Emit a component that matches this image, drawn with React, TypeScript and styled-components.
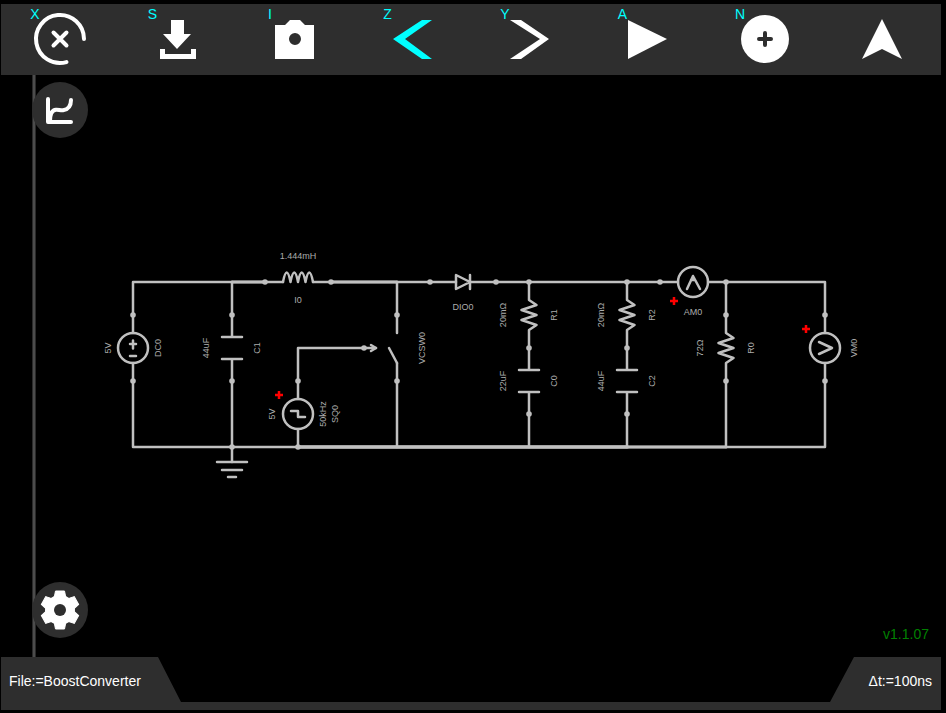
import React from "react";
import styled, { createGlobalStyle } from "styled-components";

const GlobalStyle = createGlobalStyle`
  html, body { margin: 0; background: #000; }
  * { box-sizing: border-box; }
`;

const PANEL = "#2e2e2e";
const WIRE = "#c0c0c0";

const Shell = styled.div`
  display: flex;
  flex-direction: column;
  min-height: 100vh;
  padding: 4px 5px 3px 1px;
  background: #000;
  color: #fff;
  font-family: "Liberation Sans", Arial, sans-serif;
  font-size: 14px;
  line-height: 16px;
`;

const Toolbar = styled.nav`
  display: grid;
  grid-template-columns: repeat(8, 1fr);
  height: 71px;
  background: ${PANEL};
`;

const ToolButton = styled.button<{ $active?: boolean }>`
  position: relative;
  display: flex;
  align-items: center;
  justify-content: center;
  padding: 0;
  border: 0;
  background: none;
  color: ${(p) => (p.$active ? "#00ffff" : "#ffffff")};
  font: inherit;
  cursor: pointer;
`;

const Shortcut = styled.span`
  position: absolute;
  top: 2px;
  left: 28px;
  width: 12px;
  color: #00ffff;
  text-align: center;
`;

const ToolIcon = styled.svg`
  width: 60px;
  height: 71px;
  fill: currentColor;
`;

const Workspace = styled.main`
  position: relative;
  display: flex;
  flex: 1;
`;

const Rail = styled.aside`
  display: flex;
  flex-direction: column;
  justify-content: space-between;
  width: 56px;
  margin-left: 31px;
  padding: 7px 0 19px;
  background: linear-gradient(90deg, #2a2a2a 1px, #4c4c4c 1px 3px, #2a2a2a 3px 4px, transparent 4px);
`;

const RoundButton = styled.button`
  width: 56px;
  height: 56px;
  padding: 0;
  border: 0;
  border-radius: 50%;
  background: ${PANEL};
  color: #fff;
  cursor: pointer;
`;

const RoundIcon = styled.svg`
  display: block;
  width: 56px;
  height: 56px;
`;

const Canvas = styled.section`
  display: flex;
  flex: 1;
  min-width: 0;
`;

const Schematic = styled.svg`
  flex: 1;
  min-width: 0;
  fill: none;
  stroke: ${WIRE};
  stroke-width: 2.5;
  stroke-linecap: round;
  stroke-linejoin: round;
`;

const PartText = styled.text`
  fill: #acacac;
  stroke: none;
  font-size: 9px;
  text-anchor: middle;
`;

const Version = styled.span`
  position: absolute;
  right: 12px;
  bottom: 15px;
  color: #008000;
`;

const StatusBar = styled.footer`
  display: flex;
  justify-content: space-between;
  height: 53px;
  padding: 16px 9px 0 8px;
  background: ${PANEL};
  clip-path: polygon(
    0 0, 157px 0, 180px 45px, calc(100% - 111px) 45px,
    calc(100% - 87px) 0, 100% 0, 100% 100%, 0 100%
  );
`;

type Tool = { name: string; hotkey?: string; active?: boolean; icon: React.ReactNode };

const tools: Tool[] = [
  {
    name: "Clear",
    hotkey: "X",
    icon: (
      <g fill="none" stroke="currentColor" strokeWidth="4" strokeLinecap="round">
        <path d="M54 35A24 24 0 1 0 36.5 58.1" />
        <path d="M23.5 28.5l13 13M36.5 28.5l-13 13" />
      </g>
    ),
  },
  { name: "Save", hotkey: "S", icon: <path d="M24 16h13v14h7L30 45 16 30h8zM13 45h5v5h26v-5h5v10H13z" /> },
  {
    name: "Capture image",
    hotkey: "I",
    icon: <path fillRule="evenodd" d="M10 21h10l5-5h10l5 5h9v34H10zM30 29a6 6 0 1 0 0 12a6 6 0 1 0 0-12z" />,
  },
  { name: "Undo", hotkey: "Z", active: true, icon: <path d="M11 35L40 16h10L23 35l27 20H40z" /> },
  { name: "Redo", hotkey: "Y", icon: <path d="M10 16h11l28 19-28 20H10l30-20z" /> },
  { name: "Run analysis", hotkey: "A", icon: <path d="M11 16l39 19-39 20z" /> },
  {
    name: "New element",
    hotkey: "N",
    icon: (
      <>
        <circle cx="30" cy="35" r="24" />
        <path d="M24 35h12M30 29v12" stroke={PANEL} strokeWidth="4" strokeLinecap="round" />
      </>
    ),
  },
  { name: "Navigate", icon: <path d="M30 15l20 40-20-10-20 10z" /> },
];

type Point = [number, number];

const dots: Point[] = [
  [133, 315], [133, 381], [232, 315], [232, 381], [232, 447], [265, 282], [331, 282],
  [298, 381], [298, 447], [364, 348], [397, 315], [397, 381], [430, 282], [496, 282],
  [529, 282], [529, 348], [529, 414], [627, 282], [627, 348], [627, 414], [660, 282],
  [726, 282], [726, 315], [726, 381], [825, 315], [825, 381],
];

const polarityMarks: Point[] = [[279, 395], [674, 301], [806, 329]];

const flatLabels: [string, number, number][] = [
  ["1.444mH", 298, 259],
  ["I0", 298, 303],
  ["DIO0", 463, 310],
  ["AM0", 693, 315],
];

const uprightLabels: [string, number, number][] = [
  ["5V", 111, 348], ["DC0", 161, 348], ["44uF", 209, 348], ["C1", 260, 348],
  ["5V", 275, 414], ["50kHz", 326, 414], ["SQ0", 338, 414], ["VCSW0", 425, 348],
  ["20mΩ", 506, 315], ["R1", 557, 315], ["22uF", 506, 381], ["C0", 557, 381],
  ["20mΩ", 604, 315], ["R2", 655, 315], ["44uF", 604, 381], ["C2", 655, 381],
  ["72Ω", 703, 348], ["R0", 754, 348], ["VM0", 857, 348],
];

const Resistor = ({ x, y }: { x: number; y: number }) => (
  <path d={`M${x} ${y - 33}v18l7.5 5l-15 5l15 5l-15 5l15 5l-7.5 5v18`} />
);

const Capacitor = ({ x, y }: { x: number; y: number }) => (
  <path d={`M${x} ${y - 33}v22M${x - 10} ${y - 11}h20M${x - 10} ${y + 11}h20M${x} ${y + 11}v22`} />
);

const Circuit = () => (
  <Schematic viewBox="88 75 853 582" role="img" aria-label="Boost converter schematic">
    <path d="M133 333V282H283M313 282H456M470 282H678M708 282H825V333M825 363V447H133V363" />
    <path d="M232 282v33M232 381v81M298 399V348H376M298 429v18M397 282v51M397 363v84M529 414v33M627 414v33M726 282v33M726 381v66" />
    <path d="M232 282h33M331 282h66M298 447h428" strokeWidth="3" />
    <path d="M298 447H627" strokeWidth="4" strokeOpacity="0.6" />
    <path d="M217 462h30M222 470h20M228 477h8" />
    <path d="M283 282Q286.700 263 290.500 282Q294.300 263 298 282Q301.700 263 305.500 282Q309.300 263 313 282" />
    <path d="M456 275v14l14-7zM470 275v14" />
    <path d="M389 348l8 15M371 345l5 3-5 3" />
    <Capacitor x={232} y={348} />
    <Capacitor x={529} y={381} />
    <Capacitor x={627} y={381} />
    <Resistor x={529} y={315} />
    <Resistor x={627} y={315} />
    <Resistor x={726} y={348} />
    <circle cx="133" cy="348" r="15" />
    <path d="M130 344h6M133 340.500v8M130 356h6" />
    <circle cx="298" cy="414" r="15" />
    <path d="M291 411h7v6h7" />
    <circle cx="693" cy="282" r="15" />
    <path d="M687 289l6-13 7 13M691 280h4" />
    <circle cx="825" cy="348" r="15" />
    <path d="M819 342l13 6-13 6" />
    <g fill={WIRE} stroke="none">
      {dots.map(([x, y]) => (
        <circle key={`${x}-${y}`} cx={x} cy={y} r="2.8" />
      ))}
    </g>
    <g stroke="#ff0000" strokeLinecap="butt">
      {polarityMarks.map(([x, y]) => (
        <path key={x} d={`M${x - 4} ${y}h8M${x} ${y - 4}v8`} />
      ))}
    </g>
    {flatLabels.map(([label, x, y]) => (
      <PartText key={label} x={x} y={y}>{label}</PartText>
    ))}
    {uprightLabels.map(([label, x, y]) => (
      <PartText key={`${x}-${y}`} transform={`translate(${x} ${y}) rotate(-90)`}>{label}</PartText>
    ))}
  </Schematic>
);

export default function App() {
  return (
    <>
      <GlobalStyle />
      <Shell>
        <Toolbar>
          {tools.map((tool) => (
            <ToolButton key={tool.name} type="button" aria-label={tool.name} $active={tool.active}>
              {tool.hotkey && <Shortcut>{tool.hotkey}</Shortcut>}
              <ToolIcon viewBox="0 0 60 71" aria-hidden="true">{tool.icon}</ToolIcon>
            </ToolButton>
          ))}
        </Toolbar>
        <Workspace>
          <Rail>
            <RoundButton type="button" aria-label="Graph">
              <RoundIcon viewBox="0 0 56 56" fill="none" stroke="currentColor" strokeWidth="4" strokeLinecap="round" strokeLinejoin="round">
                <path d="M16 17v23h23" />
                <path d="M18 39C18 31 20 28 24 27.700C27 27.500 28 28.600 31 28.300C36 27.500 39 24 39 18" />
              </RoundIcon>
            </RoundButton>
            <RoundButton type="button" aria-label="Settings">
              <RoundIcon viewBox="-28 -28 56 56" fill="currentColor">
                <circle r="15" />
                {[0, 60, 120, 180, 240, 300].map((angle) => (
                  <path
                    key={angle}
                    d="M-4.500 -19h9l1 5l1 3h-13l1-3z"
                    stroke="currentColor"
                    strokeLinejoin="round"
                    transform={`rotate(${angle})`}
                  />
                ))}
                <circle r="6" fill={PANEL} />
              </RoundIcon>
            </RoundButton>
          </Rail>
          <Canvas>
            <Circuit />
          </Canvas>
          <Version>v1.1.07</Version>
        </Workspace>
        <StatusBar>
          <span>File:=BoostConverter</span>
          <span>Δt:=100ns</span>
        </StatusBar>
      </Shell>
    </>
  );
}
